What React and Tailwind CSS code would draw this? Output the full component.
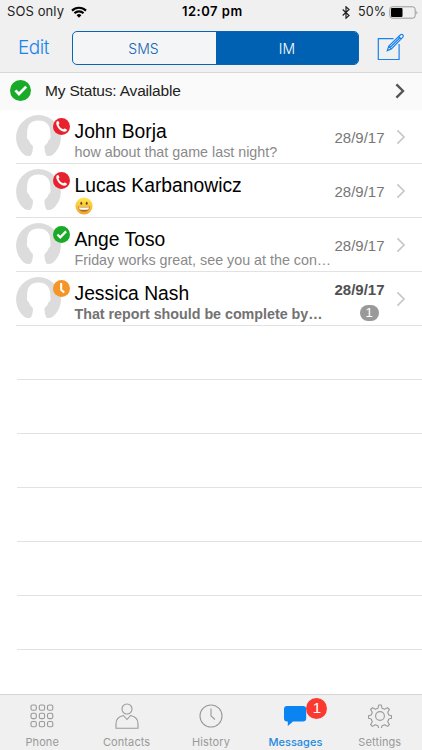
const contacts = [
  { name: 'John Borja', message: 'how about that game last night?', date: '28/9/17', presence: 'busy' },
  { name: 'Lucas Karbanowicz', emoji: true, date: '28/9/17', presence: 'busy' },
  { name: 'Ange Toso', message: 'Friday works great, see you at the con…', date: '28/9/17', presence: 'available' },
  { name: 'Jessica Nash', message: 'That report should be complete by…', date: '28/9/17', presence: 'away', unread: 1 },
];

function Presence({ type, className }) {
  return (
    <svg viewBox="0 0 20 20" className={className}>
      {type === 'available' && (
        <>
          <circle cx="10" cy="10" r="10" fill="#19aa28" />
          <path d="M5.2 9.900l3.300 3.400 6.900-7" fill="none" stroke="#fff" strokeWidth="2.600" />
        </>
      )}
      {type === 'busy' && (
        <>
          <circle cx="10" cy="10" r="10" fill="#e9212d" />
          <path
            d="M4.200 4.400c1-1.300 2.100-1.200 2.800.2.7 1.300.8 2.100-.5 3.100.7 2.500 2.900 4.800 5.600 5.600 1-1.300 1.900-1.200 3.200-.4 1.500.9 1.500 1.800.2 2.800C11 18.600 2 9.600 4.200 4.400z"
            fill="#fff"
          />
        </>
      )}
      {type === 'away' && (
        <>
          <circle cx="10" cy="10" r="10" fill="#f59527" />
          <path d="M9.600 3.500v8.100l3.600 3.200" fill="none" stroke="#fff" strokeWidth="2.400" />
        </>
      )}
    </svg>
  );
}

function Avatar({ presence }) {
  return (
    <div className="relative h-[45px] w-[45px] shrink-0">
      <svg viewBox="0 0 45 45" className="h-[45px] w-[45px]">
        <path
          d="M8.500 40A22.400 22.400 0 1 1 36.500 40Q34.500 41.300 30.500 40.800Q28 36 28.600 31Q32 28.500 32.600 25.300C34.500 24.500 35 22 34.300 19.500C35 10.500 30.500 5.500 22.500 5.500C14.500 5.500 10.500 10.500 11.200 19.500C10.500 22 11 24.500 12.900 25.300Q13.500 28.500 16.800 31Q17.500 36 14.800 40.800Q10.500 41.300 8.500 40z"
          fill="#dcdcdc"
        />
      </svg>
      <Presence type={presence} className="absolute top-[2.500px] left-[36.500px] h-[17px] w-[17px]" />
    </div>
  );
}

function Grin() {
  return (
    <svg viewBox="0 0 18 18" className="-mt-px h-[18px] w-[18px]">
      <defs>
        <linearGradient id="face" x1="0" y1="0" x2="0" y2="1">
          <stop offset="0" stopColor="#ffe94e" />
          <stop offset="1" stopColor="#f3a32c" />
        </linearGradient>
      </defs>
      <circle cx="9" cy="9" r="8.600" fill="url(#face)" />
      <ellipse cx="6.300" cy="6.300" rx="0.900" ry="1.500" fill="#62411c" />
      <ellipse cx="11.700" cy="6.300" rx="0.900" ry="1.500" fill="#62411c" />
      <path d="M3.300 9.500q5.700 1 11.400 0c0 3.500-2.300 5.300-5.700 5.300s-5.700-1.800-5.700-5.300z" fill="#a87430" />
      <path d="M3.900 10.200q5.100.8 10.200 0l-.7 2.300q-4.400.7-8.800 0z" fill="#fff" />
    </svg>
  );
}

function Chevron({ className }) {
  return (
    <svg viewBox="0 0 10 16" className={className} fill="none" stroke="currentColor">
      <path d="M1.400 1.300L8 8l-6.600 6.700" />
    </svg>
  );
}

function StatusBar() {
  return (
    <div className="relative flex h-6 items-center pl-[7px] font-['Inter',sans-serif] text-[13px] text-[#222]">
      <span className="w-[59px] tracking-[0.1px] whitespace-nowrap">SOS only</span>
      <svg viewBox="0 0 16 12" className="ml-[5px] h-[12px] w-4" fill="none" stroke="#000" strokeWidth="2.200">
        <path d="M1 4.600a10 10 0 0 1 14 0M3.500 7.200a6.400 6.400 0 0 1 9 0" />
        <path d="M8 11.800L5.600 9.200a3.500 3.500 0 0 1 4.800 0z" fill="#000" stroke="none" />
      </svg>
      <span className="absolute left-[182px] text-[13px] font-semibold tracking-[0.500px] text-black">12:07 pm</span>
      <svg viewBox="0 0 8 13" className="mr-[8px] ml-auto h-[13px] w-2" fill="none" stroke="#222" strokeWidth="1.200">
        <path d="M.7 3.500l6.300 6-3 2.700V.8l3 2.700-6.300 6" />
      </svg>
      <span className="w-[29px] text-[12.500px] tracking-[0.1px]">50%</span>
      <svg viewBox="0 0 29 13" className="mr-[4px] ml-[2px] h-[13px] w-[29px]">
        <rect x=".8" y=".8" width="25.400" height="11.400" rx="2.500" fill="none" stroke="#999" />
        <rect x="2" y="2" width="11.500" height="9" rx="1" fill="#000" />
        <path d="M27.500 4.500q1.500 2 0 4z" fill="#888" />
      </svg>
    </div>
  );
}

function NavBar() {
  return (
    <div className="flex h-12 items-center pl-[18px]">
      <button className="w-[54px] text-left font-['Inter',sans-serif] text-[19px] font-light tracking-[-0.5px] text-[#1683ef]">
        Edit
      </button>
      <div className="flex h-[34px] w-[287px] overflow-hidden rounded-[5px] border border-[#0a63b5] bg-[#f3f5f7]">
        <button className="w-[143px] pr-[2px] font-['Inter',sans-serif] text-[14px] font-light text-[#1566b1]">
          SMS
        </button>
        <button className="flex-1 bg-[#0061b3] font-['Inter',sans-serif] text-[14px] font-light text-white">IM</button>
      </div>
      <svg viewBox="0 0 28 28" className="mb-[3px] ml-[18px] h-7 w-7" fill="none" stroke="#1683ef" strokeWidth="1.200">
        <path d="M16.500 5.700H1.300v20.800h20.800V11" />
        <path d="M10.300 17.600l1.500-4.600L23.500 1.800q1.300-1 2.300.1t-.1 2.400L14.300 16zM11.800 13l2.500 3M21.700 3.500l2.400 2.500M13 14.500L23 4.800" />
      </svg>
    </div>
  );
}

function Row({ contact }) {
  const { name, message, emoji, date, presence, unread } = contact;
  return (
    <div className="ml-[16px] flex h-[54px] border-b border-[#e2e2e2] pt-[5px]">
      <Avatar presence={presence} />
      <div className="ml-[13.500px] w-[259px] shrink-0">
        <p className="mt-[4px] h-[25px] text-[19.300px] leading-[25px] whitespace-nowrap text-black">{name}</p>
        {emoji ? (
          <Grin />
        ) : (
          <p
            className={
              unread
                ? 'text-[14.300px] leading-[17px] font-bold tracking-[-0.020px] whitespace-nowrap text-[#727272]'
                : 'text-[14.300px] leading-[17px] whitespace-nowrap text-[#8a8a8a]'
            }
          >
            {message}
          </p>
        )}
      </div>
      <div className="flex w-[51px] shrink-0 flex-col items-end">
        {unread ? (
          <>
            <span className="mt-[3px] text-[15px] leading-5 font-bold text-[#505050]">{date}</span>
            <span className="mt-[5px] mr-[6px] flex h-4 w-[19px] items-center justify-center rounded-full bg-[#999] text-[13px] text-white">
              {unread}
            </span>
          </>
        ) : (
          <span className="mt-[13px] text-[15px] leading-5 text-[#777]">{date}</span>
        )}
      </div>
      <Chevron className="mt-[14px] ml-[11px] h-4 w-[10px] stroke-[1.700] text-[#c7c7cc]" />
    </div>
  );
}

const gray = '#999';

function PhoneIcon() {
  return (
    <svg viewBox="0 0 24 24" className="h-6 w-6" fill="none" stroke={gray} strokeWidth="1.100">
      {[1, 9.3, 17.5].map((y) =>
        [1, 9.3, 17.5].map((x) => <rect key={`${x}-${y}`} x={x} y={y} width="5.300" height="5.300" rx="1.600" />)
      )}
    </svg>
  );
}

function ContactsIcon() {
  return (
    <svg viewBox="0 0 24 26" className="h-[26px] w-6" fill="none" stroke={gray} strokeWidth="1.100">
      <circle cx="12" cy="6" r="5" />
      <path d="M8.400 12.500C4 13.500 1 16.500 1 20.500v4.700h22v-4.700c0-4-3-7-7.400-8L12 16.500z" />
    </svg>
  );
}

function HistoryIcon() {
  return (
    <svg viewBox="0 0 24 24" className="h-6 w-6" fill="none" stroke={gray} strokeWidth="1.100">
      <circle cx="12" cy="12" r="11" />
      <path d="M12 4.500V12l4 3.500" />
    </svg>
  );
}

function MessagesIcon() {
  return (
    <div className="relative h-[22px] w-6">
      <svg viewBox="0 0 24 22" className="h-[22px] w-6" fill="#0a84f2">
        <path d="M4 1h16q3.200 0 3.200 3.200v9q0 3.300-3.200 3.300h-10L4.800 21v-4.500H4q-3 0-3-3.300v-9Q1 1 4 1z" />
      </svg>
      <span className="absolute -top-[7px] left-[23px] flex h-[21px] w-[21px] items-center justify-center rounded-full bg-[#fc3931] text-[15px] text-white">
        1
      </span>
    </div>
  );
}

function SettingsIcon() {
  return (
    <svg viewBox="0 0 24 24" className="h-6 w-6" fill="none" stroke={gray} strokeWidth="1.100" strokeLinejoin="round">
      <circle cx="12" cy="12" r="4.400" />
      <path d="M10.700 1h2.600l.7 3.200 2.700 1.100 2.800-1.700 1.900 1.900-1.700 2.800 1.100 2.700 2.700.7v2.600l-2.700.7-1.100 2.700 1.700 2.800-1.900 1.900-2.800-1.700-2.700 1.100-.7 2.700h-2.600l-.7-2.700-2.700-1.100-2.800 1.700-1.900-1.900 1.700-2.800-1.100-2.700-2.700-.7v-2.600l2.700-.7 1.100-2.700-1.700-2.800 1.900-1.900 2.800 1.700 2.700-1.100z" />
    </svg>
  );
}

const tabs = [
  { label: 'Phone', Icon: PhoneIcon },
  { label: 'Contacts', Icon: ContactsIcon },
  { label: 'History', Icon: HistoryIcon },
  { label: 'Messages', Icon: MessagesIcon, active: true },
  { label: 'Settings', Icon: SettingsIcon },
];

export default function App() {
  return (
    <div className="flex h-[750px] w-[422px] flex-col overflow-hidden bg-white font-['Liberation_Sans',Arial,sans-serif]">
      <header className="h-[73px] shrink-0 border-b border-[#d8d8d8] bg-[#f0f0f0]">
        <StatusBar />
        <NavBar />
      </header>

      <div className="flex h-[37px] shrink-0 items-center bg-[#fafafa] pr-[17px] pb-[2px] pl-[10px]">
        <Presence type="available" className="h-[21px] w-[21px]" />
        <span className="ml-[14px] text-[15.500px] tracking-[-0.180px] text-[#222]">My Status: Available</span>
        <Chevron className="ml-auto h-4 w-[10px] stroke-[2.400] text-[#555]" />
      </div>

      <main className="flex-1 overflow-hidden">
        {contacts.map((contact) => (
          <Row key={contact.name} contact={contact} />
        ))}
        {Array.from({ length: 6 }, (_, i) => (
          <div key={i} className="ml-[17px] h-[54px] border-b border-[#e2e2e2]" />
        ))}
      </main>

      <nav className="flex h-[56px] shrink-0 border-t border-[#d5d5d5] bg-[#f0f0f0]">
        {tabs.map(({ label, Icon, active }) => (
          <button key={label} className="flex flex-1 flex-col items-center">
            <span className="flex h-[41px] items-center justify-center">
              <Icon />
            </span>
            <span
              className={
                active
                  ? "font-['Inter',sans-serif] text-[11px] leading-[13px] font-medium text-[#2588e0]"
                  : "font-['Inter',sans-serif] text-[11px] leading-[13px] tracking-[0.1px] text-[#999]"
              }
            >
              {label}
            </span>
          </button>
        ))}
      </nav>
    </div>
  );
}
